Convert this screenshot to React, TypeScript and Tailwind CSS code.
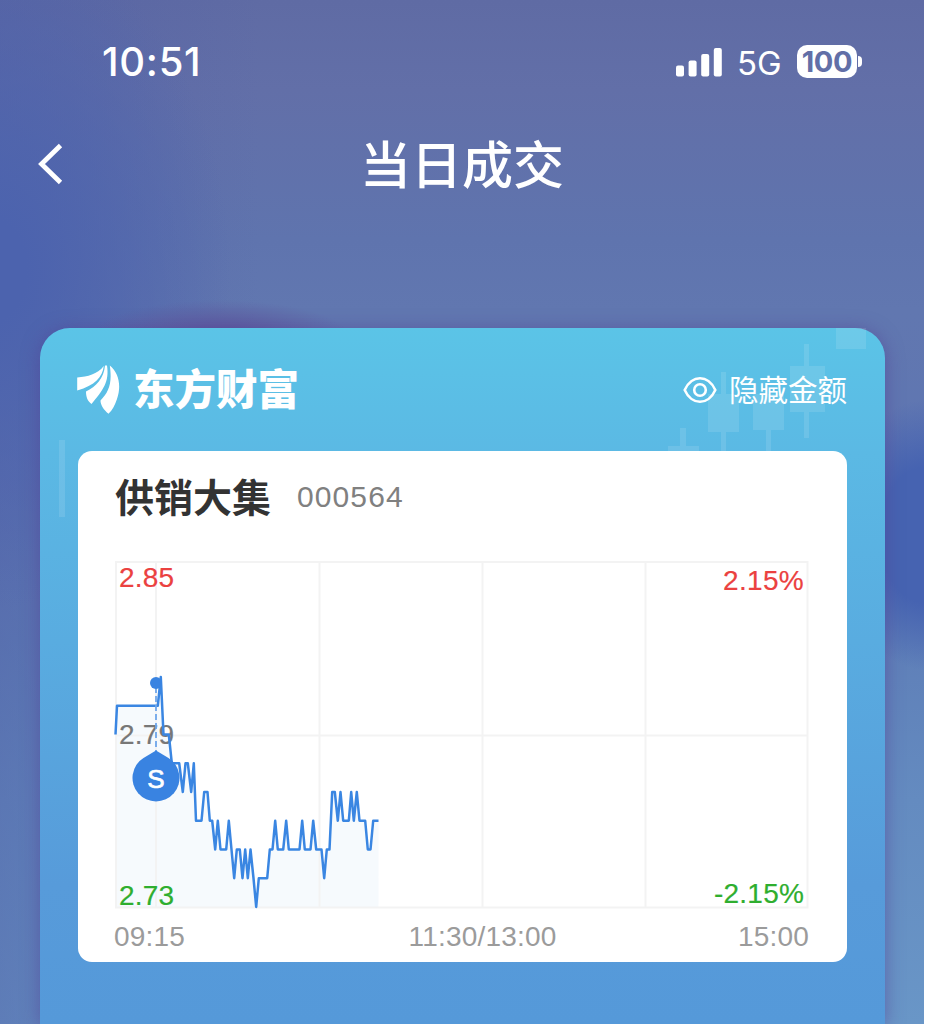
type Tick = [x: number, level: number];

const TOP = 2.85;
const STEP = 28.75;

// x offset inside the plot, price in hundredths
const ticks: Tick[] = [
  [0.5, 279], [2, 280], [42.8, 280], [45.8, 281], [48.5, 279], [53.8, 279],
  [56.8, 278], [64.2, 278], [67.8, 277], [70.5, 278], [72.8, 278], [76.2, 277],
  [78.8, 278], [81, 276], [86.5, 276], [89.2, 277], [92.5, 277], [94.8, 276],
  [97.2, 276], [100.2, 275], [102.8, 276], [105.5, 275], [111.2, 275],
  [113.8, 276], [116.5, 275], [119.2, 274], [121.8, 275], [124.8, 275],
  [127.5, 274], [130.2, 275], [132.8, 274], [135.5, 275], [138.5, 274],
  [141.2, 273], [143.8, 274], [152.2, 274], [154.8, 275], [157.5, 275],
  [160.2, 276], [162.8, 275], [168.2, 275], [171.2, 276], [173.8, 275],
  [184.5, 275], [187.2, 276], [189.8, 275], [195.5, 275], [198.2, 276],
  [201.2, 275], [206.5, 275], [209.2, 274], [211.8, 275], [214.5, 275],
  [217.2, 277], [219.8, 277], [222.8, 276], [225.5, 277], [228.2, 276],
  [233.8, 276], [236.2, 277], [238.8, 276], [241.8, 277], [244.5, 276],
  [250.2, 276], [252.8, 275], [255.5, 275], [258.2, 276], [263.5, 276],
];

const yOf = (level: number) => 1 + (TOP * 100 - level) * STEP;

const line = ticks.map(([x, level]) => `${x},${yOf(level)}`).join(" ");
const area = `${line} 263.5,346 0.5,346`;

function StatusBar() {
  return (
    <div className="flex h-[124px] items-start justify-between pr-[62px] pl-[102px]">
      <span className="mt-[38px] font-['Inter'] text-[40px] leading-[48px] font-medium tracking-[0.7px]">
        10:51
      </span>
      <div className="mt-[45px] flex h-[33px] items-center">
        <svg className="h-[30px] w-[47px]" viewBox="0 0 47 30" fill="currentColor">
          <rect x="0" y="18.5" width="8" height="11" rx="2" />
          <rect x="12.6" y="13.5" width="8" height="16" rx="2" />
          <rect x="25.2" y="7" width="8" height="22.5" rx="2" />
          <rect x="37.8" y="1" width="8" height="28.5" rx="2" />
        </svg>
        <span className="ml-[14px] w-[44px] pt-[3px] font-['Inter'] text-[33px] leading-[33px] whitespace-nowrap">
          5G
        </span>
        <span className="ml-[16px] flex h-[33px] w-[60px] items-center justify-center rounded-[10px] bg-white font-['Inter'] text-[29px] leading-none font-bold tracking-[-0.3px] text-[#626fa7]">
          100
        </span>
        <span className="ml-[1px] h-[11px] w-[4px] rounded-r-full bg-white" />
      </div>
    </div>
  );
}

function BrandLogo() {
  return (
    <svg className="h-[50px] w-[43px]" viewBox="0 0 43 50" fill="currentColor">
      <path d="M0.2 12.5C11 11.5 20 9.5 26.8 1C25.5 12 18 20.5 0.2 25.5Z" />
      <path d="M28 0.5H30C32.5 17 26 25 14.5 39C10.5 36 9 32 9 26.5C19 22 27 13 28 0.5Z" />
      <path d="M32.8 0.5C42 8 44.5 21 40 34C38 40 35.5 45 31.5 48.8C26.5 44.5 23.5 40 23.5 35.5C31.5 27 35.5 19 32.8 0.5Z" />
    </svg>
  );
}

function EyeIcon() {
  return (
    <svg className="h-[28px] w-[34px]" viewBox="0 0 34 28" fill="none" stroke="currentColor" strokeWidth="2.6">
      <path d="M1.7 14C5 6.5 11 2.2 17 2.2S29 6.5 32.3 14C29 21.5 23 25.8 17 25.8S5 21.5 1.7 14Z" />
      <circle cx="17" cy="14" r="5.8" />
    </svg>
  );
}

// Faint candlesticks printed on the card behind its contents
function CandleBackdrop() {
  return (
    <svg className="pointer-events-none absolute inset-0 h-[200px] w-[845px]" viewBox="0 0 845 200" fill="#ffffff" fillOpacity="0.11">
      <rect x="19" y="112" width="6" height="77" />
      <path d="M640 100h6v18h13v20h-31v-20h12z" />
      <path d="M681 44h5v22h13v38h-13v30h-5v-30h-13v-38h13z" />
      <path d="M713 66h31v36h-13v32h-5v-32h-13z" />
      <path d="M764 16h5v22h16v46h-16v26h-5v-26h-14v-46h14z" />
      <rect x="796" y="0" width="30" height="21" />
    </svg>
  );
}

function IntradayChart() {
  return (
    <div className="relative mt-[38px] ml-[37px] h-[348px] w-[694px] font-['Liberation_Sans'] text-[28px] leading-[28px]">
      <svg className="block h-[348px] w-[694px] overflow-visible" viewBox="0 0 694 348" fill="none">
        <polygon points={area} fill="#f6fafd" />
        <g stroke="#f3f3f3" strokeWidth="2">
          <rect x="1" y="1" width="691.5" height="345.5" />
          <path d="M41 1V346M204.5 1V346M367.5 1V346M530.5 1V346M1 174.5H692" />
        </g>
      </svg>
      <span className="absolute top-[3px] left-[4px] tracking-[0.2px] text-[#eb4140] [-webkit-text-stroke:0.2px]">2.85</span>
      <span className="absolute top-[6px] right-[5px] tracking-[0.3px] text-[#eb4140] [-webkit-text-stroke:0.2px]">2.15%</span>
      <span className="absolute top-[160px] left-[4px] tracking-[0.2px] text-[#777777] [-webkit-text-stroke:0.2px]">2.79</span>
      <span className="absolute top-[321px] left-[4px] tracking-[0.2px] text-[#2fae2f] [-webkit-text-stroke:0.2px]">2.73</span>
      <span className="absolute top-[319px] right-[5px] tracking-[0.2px] text-[#2fae2f] [-webkit-text-stroke:0.2px]">-2.15%</span>
      <svg className="absolute inset-0 h-[348px] w-[694px] overflow-visible" viewBox="0 0 694 348" fill="none">
        <polyline points={line} stroke="#3a86e2" strokeWidth="2.5" strokeLinejoin="round" />
        <path d="M41 126V192" stroke="#6ea6ea" strokeWidth="1.8" strokeDasharray="6 3" />
        <circle cx="41" cy="122" r="6" fill="#3983e1" />
        <path d="M41 189.5L53.5 197A23.5 23.5 0 1 1 28.5 197Z" fill="#3983e1" />
      </svg>
      <span className="absolute top-[204px] left-[18px] w-[46px] text-center text-[26px] text-white [-webkit-text-stroke:0.7px]">
        S
      </span>
    </div>
  );
}

export default function App() {
  return (
    <div className="h-[1024px] w-[926px] overflow-hidden bg-white font-['Noto_Sans_CJK_SC',sans-serif] text-white">
      <div className="flex h-full w-[924px] flex-col bg-[radial-gradient(ellipse_130px_38px_at_220px_338px,#5d589e_20%,transparent_100%),radial-gradient(ellipse_90px_135px_at_925px_535px,#4663b1_50%,transparent_100%),radial-gradient(ellipse_240px_340px_at_-10px_270px,#4c63ae_15%,transparent_100%),linear-gradient(90deg,rgba(80,94,165,0.45)_0px,transparent_260px),linear-gradient(180deg,#5f6ba4_0px,#626fa8_90px,#5f74ae_240px,#6177b0_310px,#5f76b2_480px,#5f7fb8_640px,#648bc0_800px,#6996c7_1024px)]">
        <StatusBar />

        <header className="grid h-[76px] grid-cols-[100px_1fr_100px] items-center">
          <button type="button" aria-label="返回" className="mt-[4px] ml-[38px]">
            <svg className="block h-[42px] w-[25px]" viewBox="0 0 25 42" fill="none" stroke="currentColor" strokeWidth="4.8">
              <path d="M22.5 2.5L3.5 21L22.5 39.5" />
            </svg>
          </button>
          <h1 className="text-center text-[51px] leading-[76px] font-medium">当日成交</h1>
        </header>

        <main className="relative mt-[128px] ml-[40px] flex h-[696px] w-[845px] shrink-0 flex-col rounded-t-[30px] bg-[linear-gradient(180deg,#5bc4e7_0%,#5bb9e4_18%,#59ace0_45%,#579bda_80%,#5599d9_100%)] shadow-[0_2px_18px_rgba(82,65,150,0.6)]">
          <CandleBackdrop />

          <div className="relative flex h-[123px] items-center justify-between pr-[38px] pl-[37px]">
            <div className="flex items-center gap-[13px]">
              <BrandLogo />
              <span className="-mt-[5px] text-[41.5px] leading-[50px] font-black">东方财富</span>
            </div>
            <button type="button" className="flex items-center gap-[12px]">
              <EyeIcon />
              <span className="-mt-[4px] text-[29.5px] leading-[40px]">隐藏金额</span>
            </button>
          </div>

          <section className="relative ml-[38px] h-[511px] w-[769px] rounded-[14px] bg-white">
            <div className="flex h-[72px] items-center pt-[20px] pl-[37px]">
              <h2 className="-mt-[5px] text-[39px] leading-[52px] font-bold text-[#333333]">供销大集</h2>
              <span className="ml-[26px] font-['Liberation_Sans'] text-[30px] leading-[52px] tracking-[1.1px] text-[#808080]">
                000564
              </span>
            </div>

            <IntradayChart />

            <div className="mt-[14px] ml-[36px] flex w-[695px] justify-between font-['Liberation_Sans'] text-[28px] leading-[28px] tracking-[0.2px] text-[#9b9b9b]">
              <span className="w-[100px]">09:15</span>
              <span className="ml-[42px]">11:30/13:00</span>
              <span className="w-[100px] text-right">15:00</span>
            </div>
          </section>
        </main>
      </div>
    </div>
  );
}
